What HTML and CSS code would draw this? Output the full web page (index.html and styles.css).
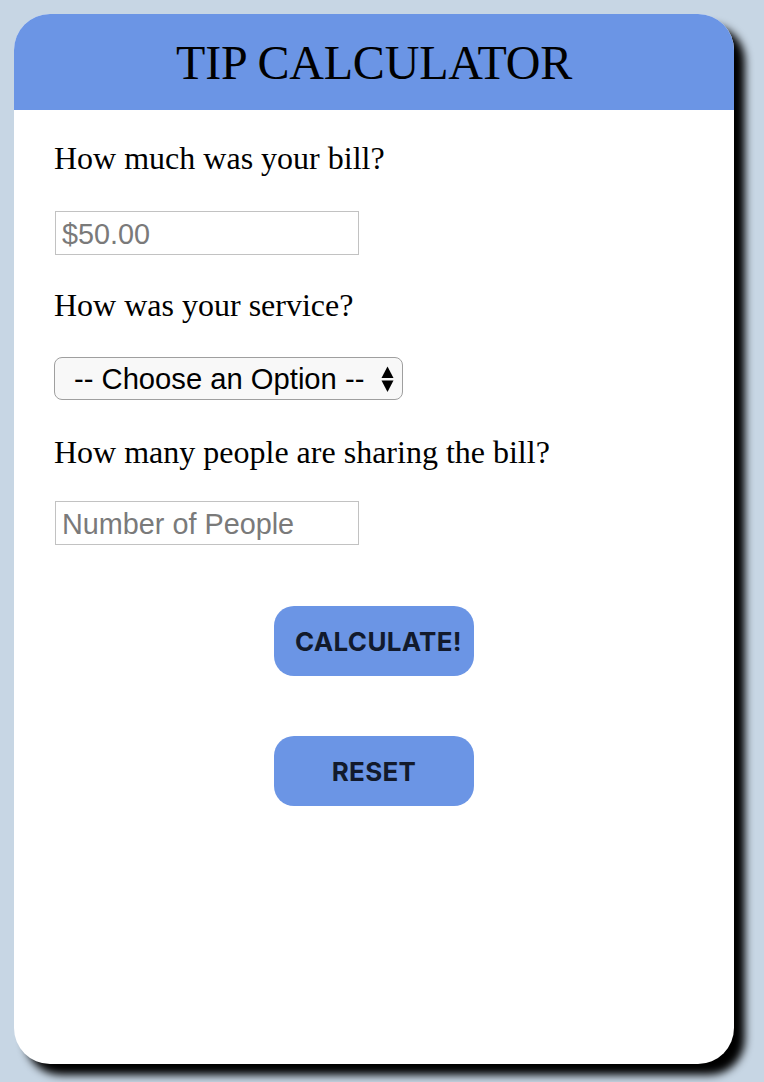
FILE: index.html
```html
<!DOCTYPE html>
<html lang="en">
<head>
<meta charset="utf-8">
<title>Tip Calculator</title>
<link rel="stylesheet" href="styles.css">
</head>
<body>
<div class="card">
  <header class="card-header">
    <h1 class="title">TIP CALCULATOR</h1>
  </header>
  <form class="card-body">
    <p class="label label-first">How much was your bill?</p>
    <input class="field" type="text" placeholder="$50.00">
    <p class="label">How was your service?</p>
    <select class="select">
      <option>-- Choose an Option --</option>
    </select>
    <p class="label">How many people are sharing the bill?</p>
    <input class="field" type="text" placeholder="Number of People">
    <div class="actions">
      <button class="btn btn-calc" type="button">CALCULATE!</button>
      <button class="btn" type="button">RESET</button>
    </div>
  </form>
</div>
</body>
</html>
```

FILE: styles.css
```css
html, body {
  margin: 0;
  padding: 0;
}
body {
  background: #c7d6e4;
  width: 764px;
  height: 1082px;
  overflow: hidden;
  font-family: "Liberation Serif", "Times New Roman", serif;
}
.card {
  margin: 14px 0 0 14px;
  width: 720px;
  height: 1050px;
  background: #fff;
  border-radius: 36px;
  box-shadow: 11px 11px 9px #000;
  overflow: hidden;
  display: flex;
  flex-direction: column;
}
.card-header {
  background: #6b95e5;
  height: 96px;
  display: flex;
  align-items: center;
  justify-content: center;
}
.title {
  margin: 0;
  font-weight: normal;
  font-size: 48px;
  line-height: 1;
  color: #000;
  padding-top: 2px;
  letter-spacing: -0.2px;
}
.card-body {
  display: flex;
  flex-direction: column;
  align-items: flex-start;
  padding: 0 40px;
}
.label {
  margin: 32px 0 34px 0;
  font-size: 32px;
  line-height: 36px;
  color: #000;
}
.label-first {
  margin-top: 30px;
  margin-bottom: 35px;
}
.field {
  box-sizing: border-box;
  width: 304px;
  height: 44px;
  margin: 0 0 0 1px;
  padding: 2px 6px 0 6px;
  border: 1px solid #c2c2c2;
  border-radius: 0;
  font-family: "Liberation Sans", Arial, sans-serif;
  font-size: 28.8px;
  color: #000;
  background: #fff;
  outline: none;
}
.field::placeholder {
  color: #7a7a7a;
}
.select {
  box-sizing: border-box;
  width: 349px;
  height: 43px;
  margin: 0;
  padding: 0 30px 0 19px;
  border: 1px solid #9f9f9f;
  border-radius: 8px;
  font-family: "Liberation Sans", Arial, sans-serif;
  font-size: 29.2px;
  color: #000;
  -webkit-appearance: none;
  appearance: none;
  background-color: #f8f8f8;
  background-image: url("data:image/svg+xml;utf8,<svg xmlns='http://www.w3.org/2000/svg' width='13' height='26' viewBox='0 0 13 26'><path d='M6.5 0.5 L12.5 12 L0.5 12 Z' fill='black'/><path d='M0.5 14.5 L12.5 14.5 L6.5 26 Z' fill='black'/></svg>");
  background-repeat: no-repeat;
  background-position: right 8px center;
  background-size: 13px 26px;
}
.select + .label {
  margin-top: 34px;
  margin-bottom: 31px;
}
.actions {
  align-self: stretch;
  display: flex;
  flex-direction: column;
  align-items: center;
  gap: 60px;
  margin-top: 61px;
}
.btn {
  width: 200px;
  height: 70px;
  border: none;
  border-radius: 20px;
  background: #6b95e5;
  color: #121a2c;
  font-family: Inter, "Liberation Sans", Arial, sans-serif;
  font-weight: 700;
  font-size: 26px;
  letter-spacing: 0.3px;
  padding: 0;
}
.btn-calc {
  padding-left: 9px;
  white-space: nowrap;
}
```
